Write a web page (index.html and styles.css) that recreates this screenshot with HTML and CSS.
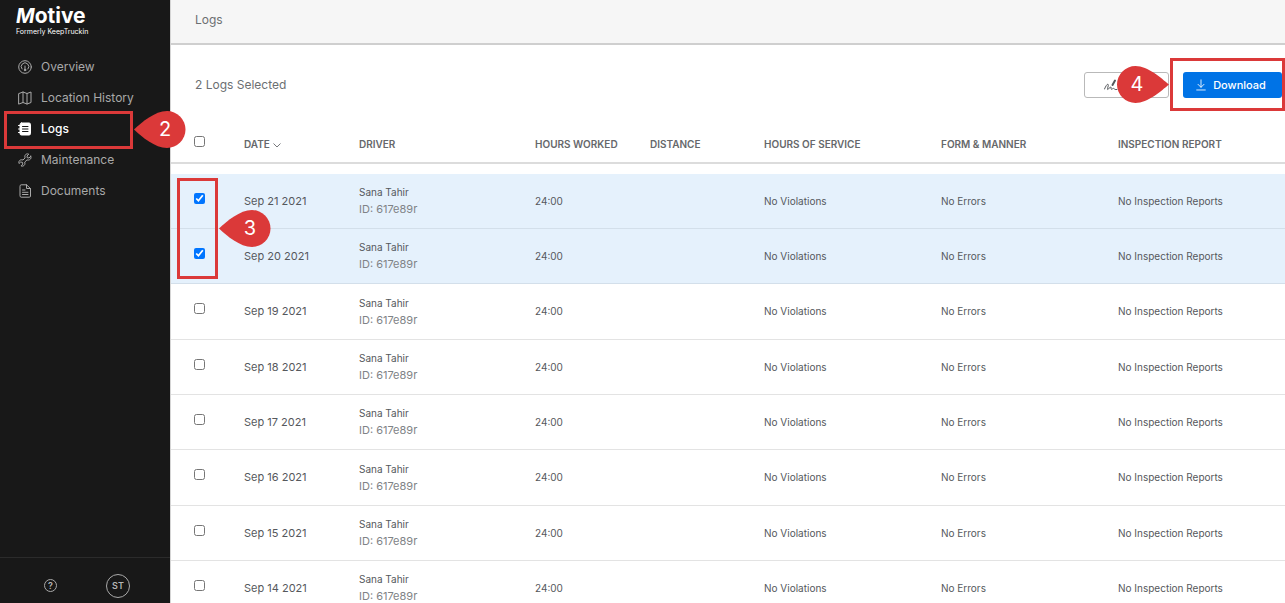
FILE: index.html
```html
<!DOCTYPE html>
<html lang="en">

<head>
    <meta charset="UTF-8">
    <meta name="viewport" content="width=device-width, initial-scale=1.0">
    <title>Logs</title>
    <link rel="stylesheet" href="styles.css">
</head>

<body>
    <!-- Sidebar -->
    <aside class="sidebar">
        <div class="brand">
            <div class="brand-name"><span class="brand-m">M</span>otive</div>
            <div class="brand-note">Formerly KeepTruckin</div>
        </div>

        <nav class="nav">
            <a href="#" class="nav-link">
                <svg class="icon" viewBox="0 0 14 14"><circle cx="7" cy="7" r="6.3"/><path d="M4 9A3.800 3.800 0 1 1 10 9M7 6v4"/><circle cx="7" cy="10" r=".8" fill="currentColor"/></svg>
                Overview
            </a>
            <a href="#" class="nav-link">
                <svg class="icon" viewBox="0 0 14 14"><path d="M1 2.5 5 1l4 1.5L13 1v10.5L9 13l-4-1.5L1 13zM5 1v10.5M9 2.5V13"/></svg>
                Location History
            </a>
            <div class="nav-item">
                <a href="#" class="nav-link active">
                    <svg class="icon" viewBox="0 0 14 14"><rect x="2" y="1" width="10.5" height="12" rx="1.5" fill="#fff"/><path d="M.5 3.5H2M.5 7H2M.5 10.5H2"/><path d="M4.5 4.5H10M4.5 7H10M4.5 9.5H10" stroke="#181818"/></svg>
                    Logs
                </a>
                <div class="frame frame-logs"></div>
                <div class="callout callout-logs">
                    <svg viewBox="0 0 52 37"><path d="M0 18.5C8 11 21 0 33 0a18.5 18.5 0 0 1 0 37C21 37 8 26 0 18.5z"/></svg>
                    <span>2</span>
                </div>
            </div>
            <a href="#" class="nav-link">
                <svg class="icon" viewBox="0 0 14 14"><path d="M12.8 3.2 11 5 9.2 4.7 9 3 10.8 1.2C9.3.5 7.6 1 7 2.5c-.4 1-.1 1.800.1 2.400L5 7c-.8-.3-1.800-.4-2.800.1C.9 7.800.5 9.300 1 10.500l1.700-1.500L4.500 9.400l.3 1.700L3 12.900c1.500.6 3.100 0 3.700-1.300.4-.9.2-1.700 0-2.500L9 6.900c.8.3 1.800.3 2.600-.2 1.400-.7 1.800-2.100 1.200-3.500z"/></svg>
                Maintenance
            </a>
            <a href="#" class="nav-link">
                <svg class="icon" viewBox="0 0 14 14"><path d="M2 2Q2 .8 3.200.8H8.500L12.500 4.500V12q0 1.200-1.200 1.200H3.200Q2 13.200 2 12zM8.500.8V4.500h4M4.500 6H7M4.500 8.300H10M4.500 10.500H10"/></svg>
                Documents
            </a>
        </nav>

        <div class="sidebar-footer">
            <button class="help-button" aria-label="Help">?</button>
            <button class="avatar">ST</button>
        </div>
    </aside>

    <!-- Main content -->
    <main class="main">
        <header class="page-header">
            <h1>Logs</h1>
        </header>

        <div class="toolbar">
            <p class="selected-count">2 Logs Selected</p>
            <div class="actions">
                <button class="button button-sign" aria-label="Sign">
                    <svg class="icon" viewBox="0 0 14 14"><path d="M.5 11C2 7.500 3.500 5.500 4.200 6.500s-1.500 5-.5 5S6 8.500 6.800 9s-.3 2.300.6 2.300S9 10 9.800 10.500 11 12 13 11.500"/><path d="M8.500 7 11 2.500" stroke-width="2"/></svg>
                </button>
                <button class="button button-download">
                    <svg class="icon" viewBox="0 0 14 14"><path d="M7 1v8.500M3.500 6.200 7 9.700l3.500-3.500M2 12.800h10"/></svg>
                    Download
                </button>
                <div class="frame frame-download"></div>
                <div class="callout callout-download">
                    <svg viewBox="0 0 52 37"><path d="M52 18.500C44 12 31 0 18.500 0a18.500 18.500 0 0 0 0 37C31 37 44 25 52 18.500z"/></svg>
                    <span>4</span>
                </div>
            </div>
        </div>

        <!-- Logs table -->
        <div class="table-wrap">
            <table class="logs-table">
                <colgroup>
                    <col class="col-check">
                    <col class="col-date">
                    <col class="col-driver">
                    <col class="col-hours">
                    <col class="col-distance">
                    <col class="col-service">
                    <col class="col-form">
                    <col class="col-report">
                </colgroup>
                <thead>
                    <tr>
                        <th><input type="checkbox" aria-label="Select all logs"></th>
                        <th>DATE <svg class="sort-icon" viewBox="0 0 8 5"><path d="M.5.5 4 4 7.500.5"/></svg></th>
                        <th>DRIVER</th>
                        <th>HOURS WORKED</th>
                        <th>DISTANCE</th>
                        <th>HOURS OF SERVICE</th>
                        <th>FORM &amp; MANNER</th>
                        <th>INSPECTION REPORT</th>
                    </tr>
                </thead>
                <tbody>
                    <tr class="selected">
                        <td><input type="checkbox" aria-label="Select Sep 21 2021" checked></td>
                        <td class="date">Sep 21 2021</td>
                        <td>Sana Tahir<span class="driver-id">ID: 617e89r</span></td>
                        <td>24:00</td>
                        <td></td>
                        <td>No Violations</td>
                        <td>No Errors</td>
                        <td>No Inspection Reports</td>
                    </tr>
                    <tr class="selected">
                        <td><input type="checkbox" aria-label="Select Sep 20 2021" checked></td>
                        <td class="date">Sep 20 2021</td>
                        <td>Sana Tahir<span class="driver-id">ID: 617e89r</span></td>
                        <td>24:00</td>
                        <td></td>
                        <td>No Violations</td>
                        <td>No Errors</td>
                        <td>No Inspection Reports</td>
                    </tr>
                    <tr>
                        <td><input type="checkbox" aria-label="Select Sep 19 2021"></td>
                        <td class="date">Sep 19 2021</td>
                        <td>Sana Tahir<span class="driver-id">ID: 617e89r</span></td>
                        <td>24:00</td>
                        <td></td>
                        <td>No Violations</td>
                        <td>No Errors</td>
                        <td>No Inspection Reports</td>
                    </tr>
                    <tr>
                        <td><input type="checkbox" aria-label="Select Sep 18 2021"></td>
                        <td class="date">Sep 18 2021</td>
                        <td>Sana Tahir<span class="driver-id">ID: 617e89r</span></td>
                        <td>24:00</td>
                        <td></td>
                        <td>No Violations</td>
                        <td>No Errors</td>
                        <td>No Inspection Reports</td>
                    </tr>
                    <tr>
                        <td><input type="checkbox" aria-label="Select Sep 17 2021"></td>
                        <td class="date">Sep 17 2021</td>
                        <td>Sana Tahir<span class="driver-id">ID: 617e89r</span></td>
                        <td>24:00</td>
                        <td></td>
                        <td>No Violations</td>
                        <td>No Errors</td>
                        <td>No Inspection Reports</td>
                    </tr>
                    <tr>
                        <td><input type="checkbox" aria-label="Select Sep 16 2021"></td>
                        <td class="date">Sep 16 2021</td>
                        <td>Sana Tahir<span class="driver-id">ID: 617e89r</span></td>
                        <td>24:00</td>
                        <td></td>
                        <td>No Violations</td>
                        <td>No Errors</td>
                        <td>No Inspection Reports</td>
                    </tr>
                    <tr>
                        <td><input type="checkbox" aria-label="Select Sep 15 2021"></td>
                        <td class="date">Sep 15 2021</td>
                        <td>Sana Tahir<span class="driver-id">ID: 617e89r</span></td>
                        <td>24:00</td>
                        <td></td>
                        <td>No Violations</td>
                        <td>No Errors</td>
                        <td>No Inspection Reports</td>
                    </tr>
                    <tr>
                        <td><input type="checkbox" aria-label="Select Sep 14 2021"></td>
                        <td class="date">Sep 14 2021</td>
                        <td>Sana Tahir<span class="driver-id">ID: 617e89r</span></td>
                        <td>24:00</td>
                        <td></td>
                        <td>No Violations</td>
                        <td>No Errors</td>
                        <td>No Inspection Reports</td>
                    </tr>
                </tbody>
            </table>
            <div class="frame frame-checks"></div>
            <div class="callout callout-checks">
                <svg viewBox="0 0 52 37"><path d="M0 18.500C8 11 21 0 33 0a18.500 18.500 0 0 1 0 37C21 37 8 26 0 18.500z"/></svg>
                <span>3</span>
            </div>
        </div>
    </main>
</body>

</html>
```

FILE: styles.css
```css
/* Base styling */
* {
    box-sizing: border-box;
}

body {
    margin: 0;
    display: flex;
    height: 100vh;
    overflow: hidden;
    font-family: Inter, Arial, sans-serif;
    font-size: 11px;
    color: #55585c;
    background: #fff;
}

button {
    font-family: inherit;
    cursor: pointer;
}

.icon {
    width: 14px;
    height: 14px;
    flex: none;
    fill: none;
    stroke: currentColor;
    stroke-width: 1;
    stroke-linecap: round;
    stroke-linejoin: round;
}

/* Sidebar */
.sidebar {
    position: relative;
    z-index: 2;
    flex: none;
    display: flex;
    flex-direction: column;
    width: 170px;
    background: #181818;
}

.brand {
    padding: 4px 16px 0;
    height: 52px;
    color: #fff;
}

.brand-name {
    font-size: 21px;
    line-height: 23px;
    font-weight: 700;
}

.brand-m {
    font-style: italic;
    font-size: 20px;
}

.brand-note {
    font-size: 7px;
    line-height: 8px;
    white-space: nowrap;
}

.nav-item {
    position: relative;
}

.nav-link {
    display: flex;
    align-items: center;
    gap: 9px;
    height: 31px;
    padding: 0 0 2px 18px;
    font-size: 12px;
    color: #a9a9a9;
    text-decoration: none;
}

.nav-link.active {
    color: #fff;
    font-weight: 500;
}

.sidebar-footer {
    display: flex;
    align-items: center;
    justify-content: space-between;
    margin-top: auto;
    height: 46px;
    padding: 10px 40px 0 44px;
    border-top: 1px solid #2b2b2b;
}

.help-button,
.avatar {
    display: flex;
    align-items: center;
    justify-content: center;
    padding: 0;
    border: 1px solid #a9a9a9;
    border-radius: 50%;
    background: none;
    color: #b5b5b5;
    font-weight: 600;
    font-size: 9px;
}

.help-button {
    width: 13px;
    height: 13px;
}

.avatar {
    width: 24px;
    height: 24px;
}

/* Main content */
.main {
    flex: 1;
    min-width: 0;
    border-left: 1px solid #d5d5d5;
}

.page-header {
    display: flex;
    align-items: center;
    height: 45px;
    padding: 0 24px 4px;
    background: #f6f6f6;
    border-bottom: 2px solid #cfcfcf;
}

.page-header h1,
.selected-count {
    margin: 0;
    font-size: 12px;
    font-weight: 400;
    color: #6c6f72;
}

.selected-count {
    padding-bottom: 2px;
}

.toolbar {
    display: flex;
    align-items: center;
    justify-content: space-between;
    height: 80px;
    padding: 0 3px 0 24px;
}

.actions {
    position: relative;
    display: flex;
    gap: 14px;
}

.button {
    display: flex;
    align-items: center;
    justify-content: center;
    gap: 6px;
    height: 26px;
    border-radius: 3px;
    font-size: 11px;
    font-weight: 500;
}

.button-sign {
    justify-content: flex-start;
    width: 85px;
    padding: 0 19px;
    border: 1px solid #b9b9b9;
    background: #fff;
    color: #55585c;
}

.button-download {
    width: 99px;
    padding: 0 4px 0 0;
    border: none;
    background: #0073e6;
    color: #fff;
}

.button-download .icon {
    width: 12px;
    height: 12px;
}

/* Logs table */
.table-wrap {
    position: relative;
}

.logs-table {
    width: 100%;
    table-layout: fixed;
    border-collapse: separate;
    border-spacing: 0;
}

.col-check {
    width: 73px;
}

.col-date,
.col-hours {
    width: 115px;
}

.col-distance {
    width: 114px;
}

.col-driver {
    width: 176px;
}

.col-service,
.col-form {
    width: 177px;
}

.col-report {
    width: 167px;
}

.logs-table th,
.logs-table td {
    padding: 0;
    text-align: left;
    vertical-align: middle;
    font-size: 10px;
    line-height: 17px;
    white-space: nowrap;
}

.logs-table th {
    height: 39px;
    padding-top: 2px;
    font-weight: 600;
    color: #66686b;
    border-bottom: 2px solid #dcdcdc;
}

/* space between the header line and the first row */
.logs-table tbody::before {
    content: "";
    display: block;
    height: 10px;
}

.logs-table td {
    height: 55px;
    border-bottom: 1px solid #e3e3e3;
}

.logs-table tr:nth-child(3n) td {
    height: 56px;
}

.logs-table .selected td {
    background: #e5f1fc;
    border-bottom-color: #d3dfea;
}

.logs-table .date {
    font-size: 11px;
}

.logs-table input {
    display: block;
    width: 11px;
    height: 11px;
    margin: 0 0 6px 23px;
}

.driver-id {
    display: block;
    font-size: 11px;
    color: #808386;
}

.sort-icon {
    width: 8px;
    height: 5px;
    margin-left: 1px;
    fill: none;
    stroke: #77797c;
}

/* Step markers */
.frame {
    position: absolute;
    border: 3px solid #db3939;
    pointer-events: none;
}

.frame-logs {
    left: 4px;
    top: -3px;
    width: 129px;
    height: 38px;
}

.frame-download {
    right: -3px;
    top: -14px;
    width: 115px;
    height: 53px;
}

.frame-checks {
    left: 6px;
    top: 53px;
    width: 41px;
    height: 101px;
}

.callout {
    position: absolute;
    width: 52px;
    height: 37px;
    color: #fff;
    font-size: 20px;
    line-height: 37px;
    text-align: center;
}

.callout svg {
    position: absolute;
    inset: 0;
    fill: #db3939;
}

.callout span {
    position: relative;
}

.callout-logs {
    left: 134px;
    top: -3px;
    padding-left: 10px;
}

.callout-checks {
    left: 48px;
    top: 85px;
    padding-left: 10px;
}

.callout-download {
    right: 113px;
    top: -6px;
    padding-right: 12px;
}
```
